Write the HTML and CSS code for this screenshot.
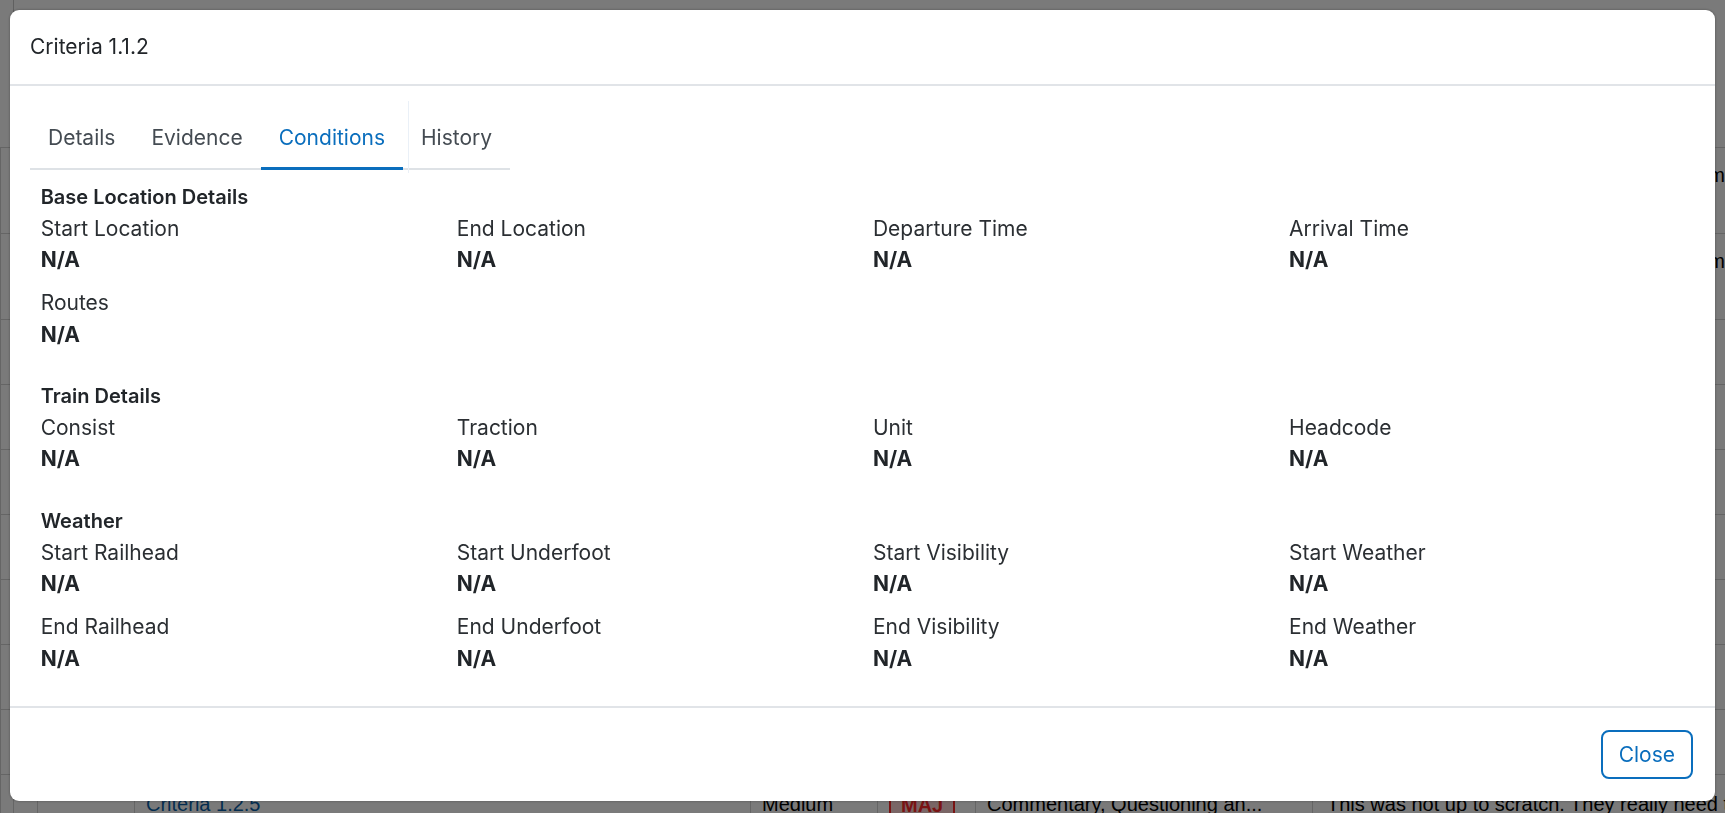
FILE: index.html
```html
<!DOCTYPE html>
<html lang="en">
<head>
    <meta charset="UTF-8">
    <meta name="viewport" content="width=device-width, initial-scale=1.0">
    <title>Criteria 1.1.2</title>
    <link rel="stylesheet" href="styles.css">
</head>
<body>
    <!-- page behind the dialog -->
    <div class="page">
        <table class="criteria-table">
            <colgroup>
                <col style="width: 13px">
                <col style="width: 24px">
                <col style="width: 97px">
                <col style="width: 616px">
                <col style="width: 127px">
                <col style="width: 98px">
                <col style="width: 337px">
                <col style="width: 600px">
            </colgroup>
            <tr class="row-head"><td></td><td></td><td></td><td></td><td></td><td></td><td></td><td></td></tr>
            <tr class="row-tall">
                <td></td><td></td><td></td><td></td><td></td><td></td><td></td>
                <td><div>The assessment was carried out by the team</div><a class="doc-link" href="#">Evidence attached to this one</a></td>
            </tr>
            <tr class="row-tall">
                <td></td><td></td><td></td><td></td><td></td><td></td><td></td>
                <td><div>The assessment was carried out by the team</div><a class="doc-link" href="#">Evidence attached to this one</a></td>
            </tr>
            <tr><td></td><td></td><td></td><td></td><td></td><td></td><td></td><td></td></tr>
            <tr><td></td><td></td><td></td><td></td><td></td><td></td><td></td><td></td></tr>
            <tr><td></td><td></td><td></td><td></td><td></td><td></td><td></td><td></td></tr>
            <tr><td></td><td></td><td></td><td></td><td></td><td></td><td></td><td></td></tr>
            <tr><td></td><td></td><td></td><td></td><td></td><td></td><td></td><td></td></tr>
            <tr><td></td><td></td><td></td><td></td><td></td><td></td><td></td><td></td></tr>
            <tr><td></td><td></td><td></td><td></td><td></td><td></td><td></td><td></td></tr>
            <tr>
                <td></td><td></td><td></td>
                <td><a class="row-link" href="#">Criteria 1.2.5</a></td>
                <td>Medium</td>
                <td><span class="badge-maj">MAJ</span></td>
                <td>Commentary, Questioning an...</td>
                <td>This was not up to scratch. They really need to improve</td>
            </tr>
        </table>
    </div>

    <div class="backdrop">
        <div class="modal">
            <div class="modal-header">
                <h5 class="modal-title">Criteria 1.1.2</h5>
            </div>

            <div class="modal-body">
                <ul class="tabs">
                    <li class="tab">Details</li>
                    <li class="tab">Evidence</li>
                    <li class="tab active">Conditions</li>
                    <li class="tab tab-divided">History</li>
                </ul>

                <div class="tab-pane">
                    <section class="group">
                        <h6 class="group-title">Base Location Details</h6>
                        <div class="field-grid">
                            <div class="field"><div class="label">Start Location</div><div class="value">N/A</div></div>
                            <div class="field"><div class="label">End Location</div><div class="value">N/A</div></div>
                            <div class="field"><div class="label">Departure Time</div><div class="value">N/A</div></div>
                            <div class="field"><div class="label">Arrival Time</div><div class="value">N/A</div></div>
                            <div class="field"><div class="label">Routes</div><div class="value">N/A</div></div>
                        </div>
                    </section>

                    <section class="group">
                        <h6 class="group-title">Train Details</h6>
                        <div class="field-grid">
                            <div class="field"><div class="label">Consist</div><div class="value">N/A</div></div>
                            <div class="field"><div class="label">Traction</div><div class="value">N/A</div></div>
                            <div class="field"><div class="label">Unit</div><div class="value">N/A</div></div>
                            <div class="field"><div class="label">Headcode</div><div class="value">N/A</div></div>
                        </div>
                    </section>

                    <section class="group">
                        <h6 class="group-title">Weather</h6>
                        <div class="field-grid">
                            <div class="field"><div class="label">Start Railhead</div><div class="value">N/A</div></div>
                            <div class="field"><div class="label">Start Underfoot</div><div class="value">N/A</div></div>
                            <div class="field"><div class="label">Start Visibility</div><div class="value">N/A</div></div>
                            <div class="field"><div class="label">Start Weather</div><div class="value">N/A</div></div>
                            <div class="field"><div class="label">End Railhead</div><div class="value">N/A</div></div>
                            <div class="field"><div class="label">End Underfoot</div><div class="value">N/A</div></div>
                            <div class="field"><div class="label">End Visibility</div><div class="value">N/A</div></div>
                            <div class="field"><div class="label">End Weather</div><div class="value">N/A</div></div>
                        </div>
                    </section>
                </div>
            </div>

            <div class="modal-footer">
                <button class="btn-outline">Close</button>
            </div>
        </div>
    </div>
</body>
</html>
```

FILE: styles.css
```css
html, body {
    margin: 0;
    height: 100%;
    overflow: hidden;
}
body {
    font-family: Inter, "Noto Sans", sans-serif;
    background-color: #fff;
    color: #212529;
}

/* page behind the dialog */
.page {
    width: 1900px;
}
.criteria-table {
    table-layout: fixed;
    border-collapse: collapse;
    width: 1912px;
    font-family: "Liberation Sans", Arial, sans-serif;
    font-size: 20px;
    color: #000;
}
.criteria-table td {
    height: 65px;
    padding: 14px 11px 0;
    border: 1px solid #d4d4d4;
    vertical-align: top;
    white-space: nowrap;
    overflow: hidden;
    box-sizing: border-box;
    line-height: 31px;
}
.criteria-table .row-head td {
    height: 147px;
    border-top: none;
    border-left: none;
    border-right: none;
}
.criteria-table .row-head td:first-child {
    border-right: 1px solid #c8c8c8;
}
.criteria-table .row-tall td {
    height: 86px;
    padding-top: 12px;
}
.criteria-table td:last-child {
    padding-left: 14px;
}
.row-link {
    color: #0a5fa8;
    text-decoration: none;
}
.doc-link {
    color: #0a5fa8;
}
.badge-maj {
    display: inline-block;
    padding: 0 10px;
    border: 2px solid #ff2a2a;
    color: #ff2a2a;
    background-color: #ffd6d6;
    font-weight: bold;
    line-height: 28px;
}

/* dialog */
.backdrop {
    position: fixed;
    inset: 0;
    display: flex;
    box-sizing: border-box;
    padding: 10px 10px 12px 9.5px;
    background-color: rgba(0, 0, 0, 0.52);
}
.modal {
    flex: 1;
    display: flex;
    flex-direction: column;
    background-color: #fff;
    border-radius: 9px;
    box-shadow: 0 0 3px rgba(0, 0, 0, 0.35);
    font-size: 21px;
}
.modal-header {
    flex: none;
    display: flex;
    align-items: center;
    box-sizing: border-box;
    height: 76px;
    padding: 0 20.5px;
    border-bottom: 2px solid #e1e4e8;
}
.modal-title {
    margin: 0;
    font-size: 21px;
    font-weight: 400;
    line-height: 32px;
}
.modal-body {
    flex: 1;
    padding: 21px 20.5px 0;
}

.tabs {
    display: flex;
    width: 480px;
    margin: 0;
    padding: 0;
    list-style: none;
    border-bottom: 2px solid #dee2e6;
}
.tab {
    position: relative;
    padding: 15px 18px 13px;
    margin-bottom: -2px;
    line-height: 32px;
    color: #444b52;
    border-bottom: 3px solid transparent;
    cursor: pointer;
}
.tab.active {
    color: #0a6ebd;
    border-bottom-color: #0a6ebd;
}
.tab-divided::before {
    content: "";
    position: absolute;
    left: 5px;
    top: -6px;
    bottom: -6px;
    width: 1px;
    background-color: #eaf0f7;
}

.tab-pane {
    padding: 11.5px 10.7px 0;
}
.group {
    margin-bottom: 19.25px;
}
.group-title {
    margin: 0;
    font-size: 20px;
    font-weight: 600;
    line-height: 31px;
    color: #212529;
}
.field-grid {
    display: grid;
    grid-template-columns: repeat(4, 1fr);
    margin: 0 -10.7px;
}
.field {
    padding: 0 10.7px 11.5px;
}
.label {
    line-height: 31.5px;
    color: #2b2f33;
}
.value {
    line-height: 31.5px;
    font-weight: 700;
    color: #212529;
}

.modal-footer {
    flex: none;
    display: flex;
    align-items: center;
    justify-content: flex-end;
    box-sizing: border-box;
    height: 94.7px;
    padding: 0 22px;
    border-top: 2px solid #e1e4e8;
}
.btn-outline {
    height: 49px;
    padding: 0 16px;
    font-family: inherit;
    font-size: 21px;
    color: #0a6ebd;
    background-color: #fff;
    border: 2px solid #0a6ebd;
    border-radius: 8px;
    cursor: pointer;
}
```
